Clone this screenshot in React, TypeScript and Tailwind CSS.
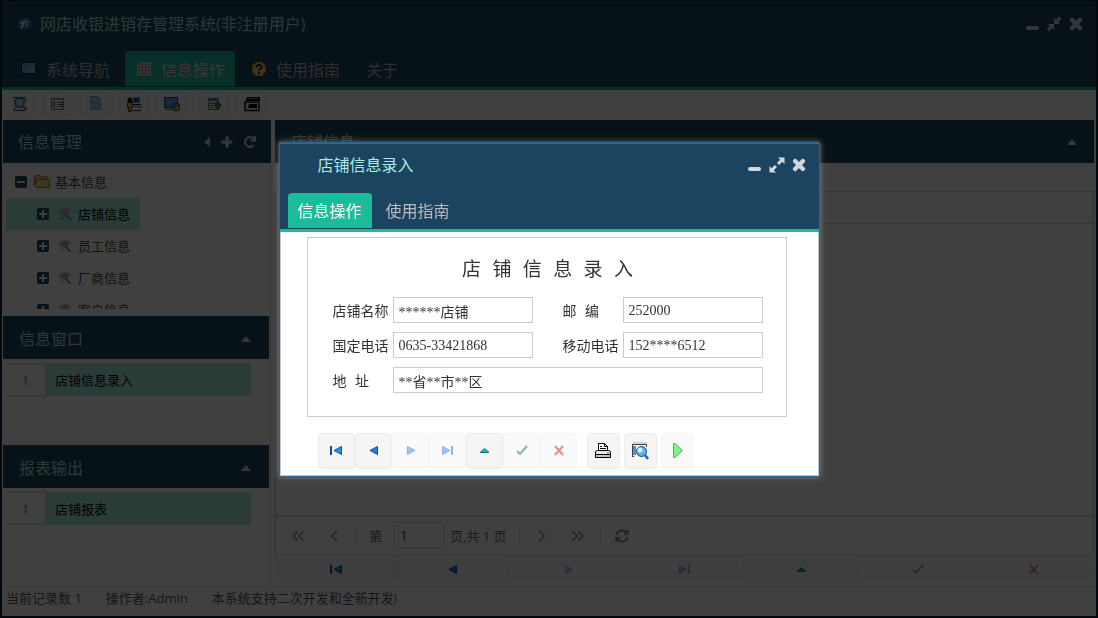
import React, { useState } from 'react';
import { ChevronLeft, ChevronRight, ChevronsLeft, ChevronsRight } from 'lucide-react';
import { FaPlus, FaRedo, FaSyncAlt, FaTimes } from 'react-icons/fa';

type NavKind = 'first' | 'prev' | 'next' | 'last' | 'up' | 'ok' | 'cancel';

const NAV_BUTTONS: { kind: NavKind; label: string; enabled: boolean }[] = [
  { kind: 'first', label: '首记录', enabled: true },
  { kind: 'prev', label: '上一条', enabled: true },
  { kind: 'next', label: '下一条', enabled: false },
  { kind: 'last', label: '末记录', enabled: false },
  { kind: 'up', label: '编辑', enabled: true },
  { kind: 'ok', label: '保存', enabled: false },
  { kind: 'cancel', label: '取消', enabled: false },
];

const TREE_ITEMS = ['店铺信息', '员工信息', '厂商信息', '客户信息'];

const NavIcon: React.FC<{ kind: NavKind }> = ({ kind }) => (
  <svg width="16" height="16" viewBox="0 0 16 16" aria-hidden="true">
    {kind === 'first' && (
      <>
        <path d="M3 3v9" stroke="#0a4fb0" strokeWidth="2" />
        <path d="M13.500 3.500v8L6 7.500z" fill="#2d8cf0" stroke="#0a4fb0" />
      </>
    )}
    {kind === 'prev' && <path d="M12.500 3.500v8L5 7.500z" fill="#1e7ce8" stroke="#0a4fb0" />}
    {kind === 'next' && <path d="M5.500 3.500v8l7.500-4z" fill="#3d94f0" stroke="#2a6cd0" />}
    {kind === 'last' && (
      <>
        <path d="M13 3v9" stroke="#2a6cd0" strokeWidth="2" />
        <path d="M3.500 3.500v8L11 7.500z" fill="#3d94f0" stroke="#2a6cd0" />
      </>
    )}
    {kind === 'up' && <path d="M4 9.500h9L8.500 5.500z" fill="#0fb4c4" stroke="#067a8a" />}
    {kind === 'ok' && <path d="M4 8l3 3 7-8" fill="none" stroke="#1c8038" strokeWidth="2.200" />}
    {kind === 'cancel' && <path d="M5 3l8 9M13 3l-8 9" stroke="#d8201c" strokeWidth="2" />}
  </svg>
);

const CaretUp = () => (
  <svg width="10" height="6" viewBox="0 0 10 6" aria-hidden="true">
    <path d="M0 6h10L5 0z" fill="#cfd8de" />
  </svg>
);

const ResizeIcon: React.FC<{ inward?: boolean }> = ({ inward }) => (
  <svg width="16" height="16" viewBox="0 0 16 16" fill="currentColor" aria-hidden="true">
    {inward ? (
      <path d="M8 8V2l2 2L13 .500 15.500 3 12 6l2 2zM8 8v6l-2-2-3 3.500L.5 13 4 10 2 8z" />
    ) : (
      <path d="M15.500.500v6.500l-2.200-2.200-3.300 3.200L8 6l3.200-3.300L9 .500zM.5 15.500V9l2.200 2.200L6 8l2 2-3.200 3.300L7 15.500z" />
    )}
  </svg>
);

const WindowTools: React.FC<{ inward?: boolean }> = ({ inward }) => (
  <div className="flex items-center gap-1.5 text-[#cfd8de]">
    <button type="button" aria-label="最小化" className="flex h-4 w-4 items-end justify-center pb-0.5">
      <span className="h-1 w-[13px] rounded-xs bg-[#cfd8de]" />
    </button>
    <button type="button" aria-label="调整大小"><ResizeIcon inward={inward} /></button>
    <button type="button" aria-label="关闭"><FaTimes size={16} stroke="currentColor" strokeWidth={45} /></button>
  </div>
);

const LogoIcon = () => (
  <svg width="16" height="16" viewBox="0 0 16 16" aria-hidden="true">
    <circle cx="9" cy="7" r="5.500" fill="#2c6fae" />
    <ellipse cx="8" cy="9.500" rx="8" ry="4.500" fill="#255f98" />
    <path d="M3 5l3 4M8 4l-4 9" stroke="#f2d8d8" strokeWidth="2" />
    <path d="M9.500 11V6h3M9.500 8.500h2" fill="none" stroke="#c8d8e8" strokeWidth="1.500" />
  </svg>
);

const ScreenIcon = () => (
  <svg width="16" height="16" viewBox="0 0 16 16" aria-hidden="true">
    <defs>
      <linearGradient id="screen" x1="0" y1="0" x2="1" y2="1">
        <stop offset="0" stopColor="#2f78b8" />
        <stop offset="1" stopColor="#a8d4f4" />
      </linearGradient>
    </defs>
    <rect x="0.500" y="1.500" width="14" height="11" fill="url(#screen)" stroke="#101010" />
    <rect x="1.500" y="2.500" width="12" height="9" fill="none" stroke="#8ab8dc" />
  </svg>
);

const GridIcon = () => (
  <svg width="16" height="16" viewBox="0 0 16 16" aria-hidden="true">
    <path d="M5 1h10v14H1V5z" fill="#e4dcdc" />
    <path d="M1 3.500h14M1 6.500h14M1 9.500h14M1 12.500h14M3.500 2v13M6.500 1v14M9.500 1v14M12.500 1v14" stroke="#988c90" strokeWidth=".8" />
  </svg>
);

const HelpIcon = () => (
  <svg width="16" height="16" viewBox="0 0 16 16" aria-hidden="true">
    <path d="M5 .5h6L15.500 5v6L11 15.500H5L.5 11V5z" fill="#f4b840" stroke="#301800" />
    <circle cx="8" cy="8" r="5.500" fill="#ffd878" />
    <path d="M5.500 6.500c0-3.500 5-3.500 5 0 0 1.600-2.500 1.200-2.500 3M8 11v2" fill="none" stroke="#202848" strokeWidth="2" />
  </svg>
);

const PreviewIcon = () => (
  <svg width="16" height="16" viewBox="0 0 16 16" aria-hidden="true">
    <path d="M1.500 1.500h12v13h-12z" fill="#e8e8e8" />
    <path d="M1 1.500h12M13.500 1v4M1 14.500h12M2.500 12v2" stroke="#484848" />
    <circle cx="7.500" cy="6.500" r="4.500" fill="#a8e0fc" stroke="#386888" strokeWidth="1.500" />
    <path d="M10.500 10l4 4" stroke="#c07048" strokeWidth="3" />
  </svg>
);

const ListIcon = () => (
  <svg width="16" height="16" viewBox="0 0 16 16" aria-hidden="true">
    <rect x="1.500" y="2.500" width="12" height="11" fill="#f4f4f4" stroke="#686868" />
    <path d="M2 3.500h11" stroke="#b0b0b0" />
    <rect x="3" y="5" width="2" height="7" fill="#4888b8" />
    <path d="M7 6.500h1M7 8.500h1M7 10.500h1M9 6.500h4M9 8.500h4M9 10.500h4" stroke="#404040" />
  </svg>
);

const PageIcon = () => (
  <svg width="16" height="16" viewBox="0 0 16 16" aria-hidden="true">
    <path d="M2.500 .5h7l3 3v10h-10z" fill="#b4e0fc" stroke="#5898c8" />
    <path d="M9.500 .5v3h3M4 5.500h7M4 7.500h7M4 9.500h7M4 11.500h7" fill="none" stroke="#60a4d4" />
  </svg>
);

const UserIcon = () => (
  <svg width="16" height="16" viewBox="0 0 16 16" aria-hidden="true">
    <path d="M7 1h7v6H7z" fill="#9098a0" />
    <path d="M8 2h5v4H8z" fill="#3838c0" />
    <path d="M6 8.500h9M7 14.500h8" stroke="#202020" />
    <path d="M7 9h9v3H7z" fill="#b8bcc0" />
    <circle cx="4" cy="4" r="2.500" fill="#201008" />
    <path d="M1.500 6.500h5v5h-1v4h-3v-4h-1z" fill="#e0a848" stroke="#503008" />
  </svg>
);

const ScreenChartIcon = () => (
  <svg width="16" height="16" viewBox="0 0 16 16" aria-hidden="true">
    <rect x="0.500" y="1.500" width="13" height="10" fill="#58a0d4" stroke="#203848" />
    <path d="M1 13.500h8" stroke="#404040" />
    <circle cx="12" cy="11" r="4" fill="#48b048" stroke="#404040" />
    <path d="M12 11V8a3 3 0 0 1 3 3z" fill="#e84848" />
    <path d="M12 11h3a3 3 0 0 1-3 3z" fill="#e8d048" />
    <path d="M12 11V8a3 3 0 0 0-3 3z" fill="#4868e0" />
  </svg>
);

const AddRowIcon = () => (
  <svg width="16" height="16" viewBox="0 0 16 16" aria-hidden="true">
    <rect x="2.500" y="2.500" width="10" height="11" fill="#e4e8ec" stroke="#606870" />
    <path d="M2 2h11v3H2z" fill="#3c88b8" />
    <path d="M4 7.500h7M4 9.500h4M4 11.500h4" stroke="#707070" />
    <path d="M12 6v7M9 9.500h6" stroke="#205020" strokeWidth="3" />
    <path d="M12 7v5M10 9.500h4" stroke="#48d048" />
  </svg>
);

const CardIcon = () => (
  <svg width="16" height="16" viewBox="0 0 16 16" aria-hidden="true">
    <path d="M3 1h13v4H2z" fill="#101010" />
    <path d="M4 2.500h11" stroke="#686868" />
    <path d="M1 6h14v8.500H1z" fill="#e8e8e8" stroke="#181818" strokeWidth="1.500" />
    <path d="M5 8h8v4H4z" fill="#000" />
    <path d="M0 10l2-6" stroke="#303030" />
  </svg>
);

const PrintIcon = () => (
  <svg width="16" height="16" viewBox="0 0 16 16" aria-hidden="true">
    <path d="M3.500 7.500v-7h6l3 3v4" fill="#fff" stroke="#000" />
    <path d="M9.500 .5v3h3M5 3.500h2M5 5.500h6" fill="none" stroke="#000" />
    <path d="M.5 8.500l2-1h11l2 1v6H.5z" fill="#e8e8e8" stroke="#000" />
    <path d="M0 11.500h16" stroke="#000" />
    <path d="M1 12h14v2H1z" fill="#c4c4c4" />
    <path d="M12 10h2" stroke="#e02020" />
  </svg>
);

const SearchDocIcon = () => (
  <svg width="18" height="18" viewBox="0 0 18 18" aria-hidden="true">
    <path d="M1.500 3v11M1 2.500h14M15.500 2v3M1 14.500h2" fill="none" stroke="#404040" />
    <path d="M2 4h3v9H2z" fill="#4098d8" />
    <path d="M2 1h14" stroke="#b0b0b0" />
    <circle cx="10.500" cy="9.500" r="5" fill="#58b4f4" stroke="#184870" />
    <circle cx="9" cy="8" r="2.500" fill="#d0f0ff" />
    <path d="M14 13l3 4" stroke="#1868a8" strokeWidth="2.500" />
  </svg>
);

const PlayIcon = () => (
  <svg width="16" height="16" viewBox="0 0 16 16" aria-hidden="true">
    <path d="M4.500 .5v14h1.500l7.500-7L6 .5z" fill="#78f888" stroke="#70a078" />
  </svg>
);

const FolderIcon = () => (
  <svg width="16" height="14" viewBox="0 0 16 14" aria-hidden="true">
    <path d="M.5 11V2l1.500-1.500h4L7.500 2h6v2" fill="#f0d070" stroke="#987018" />
    <path d="M2.500 4.500h13v8H2l-1.500-1.500z" fill="#f8e088" stroke="#987018" />
  </svg>
);

const BrushIcon = () => (
  <svg width="16" height="16" viewBox="0 0 16 16" aria-hidden="true">
    <path d="M3 4l4-2 2 1 1-2 1 2 2 1-1 3-3 3-5-2z" fill="#b4b0b4" />
    <path d="M2 5l-1 3M4 8l-1 4M6 11l1 3M4 12l2 2" stroke="#706870" strokeDasharray="1 1" />
    <path d="M8 8l6 6" stroke="#a040d0" strokeWidth="1.500" />
  </svg>
);

const ToggleIcon: React.FC<{ open?: boolean }> = ({ open }) => (
  <svg width="12" height="12" viewBox="0 0 12 12" className="shrink-0" aria-hidden="true">
    <rect width="12" height="12" rx="2" fill="#1c4460" />
    <path d={open ? 'M2 6h8' : 'M2 6h8M6 2v8'} stroke="#fff" strokeWidth="2" />
  </svg>
);

const TOOLBAR = [
  { label: '预览', icon: <PreviewIcon /> },
  { label: '列表', icon: <ListIcon /> },
  { label: '文档', icon: <PageIcon /> },
  { label: '用户', icon: <UserIcon /> },
  { label: '图表', icon: <ScreenChartIcon /> },
  { label: '添加', icon: <AddRowIcon /> },
  { label: '卡片', icon: <CardIcon /> },
];

const MAIN_TABS = [
  { label: '系统导航', icon: <ScreenIcon /> },
  { label: '信息操作', icon: <GridIcon /> },
  { label: '使用指南', icon: <HelpIcon /> },
  { label: '关于', icon: null },
];

const ListPanel: React.FC<{ title: string; item: string }> = ({ title, item }) => (
  <section className="h-[129px] shrink-0">
    <header className="mr-px flex h-[43px] items-center justify-between bg-[#1c4460] pt-0.5 pr-[18px] pl-4 text-[#a9e8da]">
      <h2 className="text-base">{title}</h2>
      <button type="button" aria-label="折叠"><CaretUp /></button>
    </header>
    <table className="mt-1 ml-[3px] w-[245px] border-y border-[#aaf0e0] text-[13px]">
      <tbody>
        <tr className="h-8">
          <td className="w-[39px] pt-0.5 text-center text-[#777]">1</td>
          <td className="bg-[#aaeedf] pt-0.5 pl-2.5 text-black">{item}</td>
        </tr>
      </tbody>
    </table>
  </section>
);

const Sidebar = () => (
  <aside className="flex w-[268px] shrink-0 flex-col border-r border-[#c4ccd0]">
    <header className="-mr-px flex h-[43px] shrink-0 items-center justify-between bg-[#1c4460] px-[15px] text-[#a9e8da]">
      <h2 className="text-base">信息管理</h2>
      <div className="flex items-center gap-[11px] text-[#cfd8de]">
        <button type="button" aria-label="收起">
          <svg width="6" height="10" viewBox="0 0 6 10"><path d="M6 0v10L0 5z" fill="currentColor" /></svg>
        </button>
        <button type="button" aria-label="添加"><FaPlus size={12} stroke="currentColor" strokeWidth={40} /></button>
        <button type="button" aria-label="刷新"><FaRedo size={12} stroke="currentColor" strokeWidth={30} /></button>
      </div>
    </header>
    <div className="h-[146px] shrink-0 overflow-hidden pt-[3px] text-[13px] text-[#444]">
      <div className="flex h-8 items-center pl-3">
        <ToggleIcon open />
        <span className="ml-[7px]"><FolderIcon /></span>
        <span className="ml-[5px] pt-0.5">基本信息</span>
      </div>
      {TREE_ITEMS.map((item, i) => (
        <div key={item} className={`ml-[3px] flex h-8 w-[134px] items-center pl-[31px] ${i === 0 ? 'bg-[#aaeedf] text-black' : ''}`}>
          <ToggleIcon />
          <span className="ml-2"><BrushIcon /></span>
          <span className="ml-[5px] pt-0.5">{item}</span>
        </div>
      ))}
    </div>
    <div className="h-[7px] shrink-0" />
    <ListPanel title="信息窗口" item="店铺信息录入" />
    <ListPanel title="报表输出" item="店铺报表" />
  </aside>
);

const Pager = () => (
  <div className="flex h-[41px] items-center border-y border-[#ddd] text-[13px] text-[#909090]">
    <button type="button" aria-label="首页" className="ml-3"><ChevronsLeft size={20} strokeWidth={2} /></button>
    <button type="button" aria-label="上一页" className="ml-4"><ChevronLeft size={20} strokeWidth={2} /></button>
    <span className="ml-3 h-4 w-px bg-[#e4e4e4]" />
    <label htmlFor="page" className="ml-3 pt-0.5 text-[#666]">第</label>
    <input id="page" defaultValue="1" className="ml-3 h-[27px] w-[50px] border border-[#ddd] bg-transparent px-[5px] text-sm text-[#444] outline-none" />
    <span className="ml-1.5 pt-0.5 text-[#666]">页,共 1 页</span>
    <span className="ml-3 h-4 w-px bg-[#e4e4e4]" />
    <button type="button" aria-label="下一页" className="ml-3"><ChevronRight size={20} strokeWidth={2} /></button>
    <button type="button" aria-label="末页" className="ml-4"><ChevronsRight size={20} strokeWidth={2} /></button>
    <span className="ml-3 h-4 w-px bg-[#e4e4e4]" />
    <button type="button" aria-label="刷新" className="ml-3.5"><FaSyncAlt size={14} /></button>
  </div>
);

const ContentPanel = () => (
  <section className="flex min-w-0 flex-1 flex-col">
    <header className="flex h-[43px] shrink-0 items-center justify-between bg-[#1c4460] pr-[17px] pl-4 text-[#a9e8da]">
      <h2 className="text-base">店铺信息</h2>
      <button type="button" aria-label="折叠"><CaretUp /></button>
    </header>
    <div className="h-[29px] shrink-0 border-b border-[#ccc]" />
    <div className="flex flex-1 flex-col border-x border-[#b4c4c8]">
      <div className="h-8 border-b border-[#ccc]" />
      <div className="flex-1" />
      <Pager />
    </div>
    <div className="flex h-[30px] shrink-0 items-start px-[3px] pt-[3px]">
      {NAV_BUTTONS.map(b => (
        <button key={b.kind} type="button" aria-label={b.label} className={`flex h-[22px] flex-1 items-center justify-center rounded border ${b.enabled ? 'border-[#ececec] bg-[#f6f6f6]' : 'border-[#f8f8f8] bg-[#fcfcfc]'}`}>
          <span className={b.enabled ? '' : 'opacity-50'}><NavIcon kind={b.kind} /></span>
        </button>
      ))}
    </div>
  </section>
);

const Field: React.FC<{ id: string; label: string; value: string; wide?: boolean }> = ({ id, label, value, wide }) => (
  <div className={`flex items-center ${wide ? 'col-span-2' : ''}`}>
    <label htmlFor={id} className="w-[60px] shrink-0 pt-1 font-[family-name:'Liberation_Mono','Noto_Sans_CJK_SC',monospace] text-sm text-[#333]">{label}</label>
    <input
      id={id}
      defaultValue={value}
      className="h-[26px] w-full min-w-0 border border-[#ccc] bg-white px-[5px] pt-0.5 font-[family-name:'Liberation_Serif','Noto_Sans_CJK_SC',serif] text-sm text-[#333] outline-none"
    />
  </div>
);

const StoreDialog = () => {
  const [tab, setTab] = useState('信息操作');

  return (
    <div role="dialog" aria-label="店铺信息录入" className="w-[541px] border border-[#2a6490] bg-white shadow-[0_0_6px_#808080]">
      <div className="bg-[#1c4460]">
        <div className="flex h-11 items-center justify-between border-t border-[#3a6684] pr-3 pl-[38px]">
          <h1 className="text-base text-[#a9eee0]">店铺信息录入</h1>
          <WindowTools />
        </div>
        <div className="flex h-[45px] items-end gap-1 border-b-3 border-[#1abc9c] pt-1.5 pl-2">
          {['信息操作', '使用指南'].map(name => (
            <button
              key={name}
              type="button"
              onClick={() => setTab(name)}
              className={`mb-px h-[35px] rounded-t px-2.5 pt-0.5 text-base ${tab === name ? 'bg-[#1abc9c] text-white' : 'text-[#b8bcc0]'}`}
            >
              {name}
            </button>
          ))}
        </div>
      </div>
      <div className="border-x border-b border-[#b9c8d6] px-[26px] pt-[5px] pb-1.5">
        <form className="mr-[5px] h-[180px] border border-[#ccc] pt-[17px] pr-[23px] pl-[25px]">
          <h2 className="text-center font-[family-name:'Liberation_Mono','Noto_Sans_CJK_SC',monospace] text-[19px] leading-8 text-[#333]">店 铺 信 息 录 入</h2>
          <div className="mt-2.5 grid grid-cols-2 gap-x-[30px] gap-y-[9px]">
            <Field id="name" label="店铺名称" value="******店铺" />
            <Field id="zip" label="邮 编" value="252000" />
            <Field id="phone" label="国定电话" value="0635-33421868" />
            <Field id="mobile" label="移动电话" value="152****6512" />
            <Field id="address" label="地 址" value="**省**市**区" wide />
          </div>
        </form>
        <div className="mt-4 flex pl-[11px]">
          {NAV_BUTTONS.map(b => (
            <button key={b.kind} type="button" aria-label={b.label} className={`flex h-9 w-[37px] items-center justify-center rounded border ${b.enabled ? 'border-[#ececec] bg-[#f5f5f5]' : 'border-[#f6f6f6] bg-[#fafafa]'}`}>
              <span className={b.enabled ? '' : 'opacity-50'}><NavIcon kind={b.kind} /></span>
            </button>
          ))}
          <div className="ml-2.5 flex gap-1">
            <button type="button" aria-label="打印" className="flex h-9 w-[33px] items-center justify-center rounded border border-[#ececec] bg-[#f5f5f5]"><PrintIcon /></button>
            <button type="button" aria-label="打印预览" className="flex h-9 w-[33px] items-center justify-center rounded border border-[#ececec] bg-[#f5f5f5]"><SearchDocIcon /></button>
            <button type="button" aria-label="运行" className="flex h-9 w-[33px] items-center justify-center rounded border border-[#f6f6f6] bg-[#fafafa]"><PlayIcon /></button>
          </div>
        </div>
      </div>
    </div>
  );
};

const App = () => {
  const [mainTab, setMainTab] = useState('信息操作');

  return (
    <div className="flex min-h-screen flex-col border-2 border-t border-[#0c1c38] bg-white font-[family-name:'Open_Sans','Noto_Sans_CJK_SC',sans-serif]">
      <div className="border-t border-[#2c5674] bg-[#1c4460]">
        <div className="flex h-11 items-center justify-between pr-3 pl-[15px]">
          <div className="flex items-center gap-[7px]">
            <LogoIcon />
            <h1 className="text-base text-[#a9e8da]">网店收银进销存管理系统(非注册用户)</h1>
          </div>
          <WindowTools inward />
        </div>
        <nav className="flex h-11 items-end gap-[5px] border-b-3 border-[#1abc9c] pl-2">
          {MAIN_TABS.map(t => (
            <button
              key={t.label}
              type="button"
              onClick={() => setMainTab(t.label)}
              className={`mb-px flex h-[35px] items-center gap-[9px] rounded-t pr-[10px] pl-[11px] text-base ${mainTab === t.label ? 'bg-[#1abc9c] text-[#e8d8d8]' : 'text-[#b8bcc0]'}`}
            >
              {t.icon}
              <span className="pt-0.5">{t.label}</span>
            </button>
          ))}
        </nav>
      </div>

      <div className="flex h-[30px] shrink-0 items-center gap-[7px] pb-0.5 pl-0.5">
        {TOOLBAR.map((t, i) => (
          <button key={t.label} type="button" aria-label={t.label} className={`flex h-6 w-[31px] items-center justify-center rounded border border-[#f0f0f0] bg-[#fafafa] ${i === 5 ? 'ml-1' : ''}`}>
            {t.icon}
          </button>
        ))}
      </div>

      <div className="flex flex-1 gap-1 pr-0.5 pl-px">
        <Sidebar />
        <ContentPanel />
      </div>

      <footer className="flex h-[30px] shrink-0 items-center gap-6 border-t border-[#eee] pb-1.5 pl-1 text-[13px] text-[#555]">
        <span>当前记录数 1</span>
        <span>操作者:Admin</span>
        <span>本系统支持二次开发和全新开发!</span>
      </footer>

      <div className="fixed inset-0 flex items-center justify-center bg-black/75">
        <StoreDialog />
      </div>
    </div>
  );
};

export default App;
